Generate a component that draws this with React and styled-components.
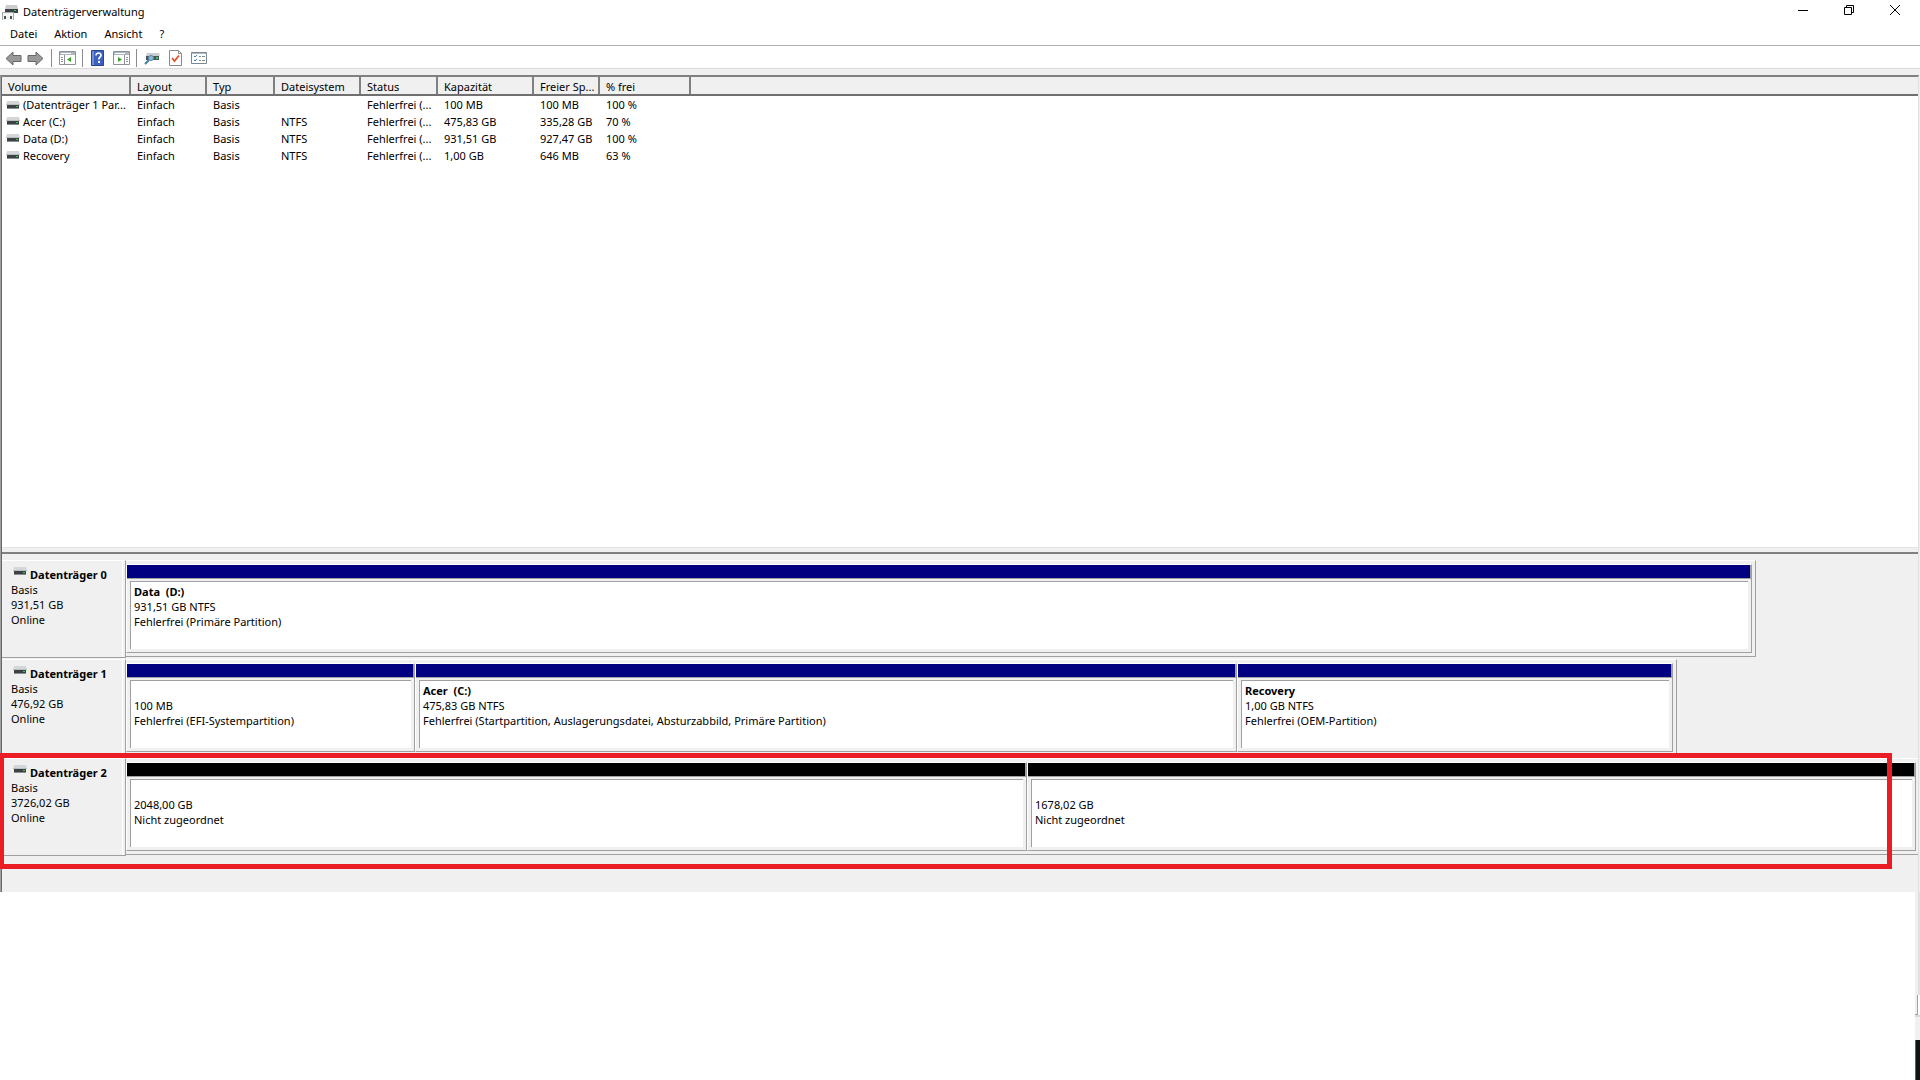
import React from 'react';
import styled, { createGlobalStyle } from 'styled-components';

const GlobalStyle = createGlobalStyle`
  *, *::before, *::after {
    box-sizing: border-box;
  }

  html, body, #root {
    height: 100%;
    margin: 0;
  }

  body {
    background: #ffffff;
    color: #000000;
    font: 11px/15px "Noto Sans", "Open Sans", sans-serif;
    overflow: hidden;
  }
`;

const Page = styled.div`
  display: flex;
  min-height: 100%;
  flex-direction: column;
`;

const TitleBar = styled.header`
  display: flex;
  height: 24px;
  align-items: center;
  padding: 0 2px;
`;

const Title = styled.h1`
  flex: 1;
  margin: 0 0 0 5px;
  font-size: 11px;
  font-weight: 400;
  line-height: 24px;
`;

const WindowButton = styled.button`
  display: flex;
  width: 46px;
  height: 24px;
  align-items: center;
  justify-content: center;
  padding: 0 0 4px;
  border: 0;
  background: none;
`;

const MenuBar = styled.nav`
  display: flex;
  height: 22px;
  gap: 17px;
  padding: 0 10px;
  border-bottom: 1px solid #b0b0b0;
`;

const MenuItem = styled.button`
  height: 20px;
  padding: 0;
  border: 0;
  background: none;
  color: inherit;
  font: inherit;
  line-height: 20px;
`;

const Toolbar = styled.div`
  display: flex;
  height: 23px;
  align-items: center;
  padding: 2px 0 0 4px;
  border-bottom: 1px solid #d9d9d9;
`;

const ToolButton = styled.button`
  display: flex;
  width: ${props => props.$width || 23}px;
  height: 20px;
  align-items: center;
  justify-content: center;
  padding: 0;
  border: 0;
  background: none;
`;

const Separator = styled.span`
  width: 1px;
  height: 18px;
  margin: 0 3px;
  background: #8c8c8c;
`;

const Body = styled.main`
  display: flex;
  height: 823px;
  flex-direction: column;
  padding: 6px 1px 0 0;
  background: #f0f0f0;
`;

const Panes = styled.div`
  display: flex;
  flex: 1;
  flex-direction: column;
  border-top: 2px solid #808080;
  border-right: 1px solid #e0e0e0;
  border-left: 1px solid #a0a0a0;
  box-shadow: inset 1px 0 #696969;
  padding-left: 1px;
`;

const VolumePane = styled.section`
  height: 470px;
  background: #ffffff;
`;

const VolumeTable = styled.table`
  width: 100%;
  border-collapse: collapse;
  border-spacing: 0;
  table-layout: fixed;
`;

const HeadCell = styled.th`
  width: ${props => (props.$width ? `${props.$width}px` : 'auto')};
  height: 18px;
  padding: 1px 0 0 6px;
  overflow: hidden;
  border-right: ${props => (props.$width ? '2px solid #808080' : '0')};
  border-bottom: 2px solid #707070;
  background: #f0f0f0;
  font-weight: 400;
  line-height: 15px;
  text-align: left;
  white-space: nowrap;
`;

const Cell = styled.td`
  height: 17px;
  padding: 1px 0 0 7px;
  overflow: hidden;
  line-height: 15px;
  white-space: nowrap;
`;

const VolumeName = styled.span`
  display: flex;
  align-items: center;
  gap: 3px;
  margin-left: -3px;
`;

const Splitter = styled.div`
  height: 7px;
  border-top: 1px solid #e3e3e3;
  border-bottom: 2px solid #808080;
`;

const DiskList = styled.section`
  padding-top: 6px;
`;

const DiskRow = styled.div`
  position: relative;
  display: flex;
  height: 99px;
`;

const DiskInfo = styled.div`
  width: 124px;
  height: 98px;
  padding: 6px 0 0 9px;
  border-top: 1px solid #ffffff;
  border-right: 1px solid #a0a0a0;
  border-bottom: 1px solid #a0a0a0;
  box-shadow: inset -2px 0 #f0f0f0, inset -3px 0 #ffffff;
`;

const DiskName = styled.h2`
  display: flex;
  gap: 3px;
  margin: 0 0 0 2px;
  font-size: 11px;
  font-weight: 700;
  line-height: 15px;
`;

const Line = styled.div`
  height: 15px;
  white-space: pre;
`;

const DiskArea = styled.div`
  flex: 1;
`;

const DiskFrame = styled.div`
  display: grid;
  width: ${props => props.$share}%;
  height: 97px;
  grid-template-columns: ${props => props.$columns};
  padding: 3px ${props => (props.$share === 100 ? 2 : 3)}px 3px 0;
  border: solid #a0a0a0;
  border-width: 1px ${props => (props.$share === 100 ? 0 : 1)}px 1px 0;
  border-top-color: #ffffff;
`;

const Partition = styled.div`
  display: flex;
  min-width: 0;
  flex-direction: column;
  border: 1px solid #a0a0a0;
  border-top-color: #ffffff;
  border-left-color: #ffffff;
`;

const PartitionBar = styled.div`
  height: 14px;
  border-right: 1px solid #a0a0a0;
  border-bottom: 1px solid #a0a0a0;
  background: ${props => props.$color};
`;

const PartitionBox = styled.div`
  flex: 1;
  margin: 2px 3px 3px;
  padding: 2px 0 0 3px;
  overflow: hidden;
  border-top: 1px solid #a0a0a0;
  border-left: 1px solid #a0a0a0;
  background: #ffffff;
`;

const PartitionName = styled(Line)`
  font-weight: 700;
`;

const Marker = styled.div`
  position: absolute;
  z-index: 1;
  top: -5px;
  right: 26px;
  left: -2px;
  height: 116px;
  border: 5px solid #ec1c24;
  border-left-width: 4px;
  pointer-events: none;
`;

// what is left of the windows behind, along the right edge
const Background = styled.div`
  display: flex;
  flex: 1;
  width: 5px;
  flex-direction: column;
  align-self: flex-end;
`;

const BackgroundEdge = styled.div`
  flex: 1;
  border-right: 2px solid #e0e0e0;
  background: #f0f0f0;
`;

const BackgroundPanel = styled.div`
  height: 20px;
  margin-right: 2px;
  border-right: 1px solid #a0a0a0;
  border-bottom: 1px solid #a0a0a0;
  background: #f0f0f0;
`;

const BackgroundStatus = styled.div`
  height: 25px;
  border-top: 2px solid #d9d9d9;
  background: #f0f0f0;
`;

const BackgroundTaskbar = styled.div`
  height: 40px;
  border-left: 1px solid #5c5f5c;
  background: #101410;
`;

const DriveIcon = () => (
  <svg width="14" height="8" viewBox="0 0 14 8" aria-hidden="true">
    <path d="M1 0h12l1 4H0z" fill="#d3d7da" />
    <path d="M0 3h14v1H0z" fill="#b9bec1" />
    <path d="M1 4h12v3H1z" fill="#3d4143" />
    <path d="M1 7h12v1H1z" fill="#8a8f92" />
    <path d="M10 5h2v1h-2z" fill="#35d04b" />
  </svg>
);

const AppIcon = () => (
  <svg width="16" height="16" viewBox="0 0 16 16" aria-hidden="true">
    <path d="M4 1h11l1 4H3z" fill="#c9cdcf" />
    <path d="M3 5h13v4H3z" fill="#3d4143" />
    <path d="M12 6h2v1h-2z" fill="#35d04b" />
    <path d="M0 8h12v8H0z" fill="#a4a8ab" />
    <path d="M1 9h10v7H1z" fill="#f4f5f5" />
    <path d="M2 12h2v3H2zM8 12h2v3H8z" fill="#4a4e50" />
  </svg>
);

const ArrowIcon = ({ forward }) => (
  <svg width="17" height="15" viewBox="0 0 17 15" aria-hidden="true">
    <path
      d="M1 7.500 8 1v3.500h8v6H8V14z"
      transform={forward ? 'translate(17 0) scale(-1 1)' : undefined}
      fill="#999999"
      stroke="#686868"
    />
  </svg>
);

const PaneIcon = ({ forward }) => (
  <svg width="17" height="14" viewBox="0 0 17 14" aria-hidden="true">
    <path d="M.5.5h16v13H.5z" fill="#ffffff" stroke="#8b929a" />
    <path d="M1 1h15v3H1z" fill="#aeb5bd" />
    <path d="M2 2.500h10" stroke="#ffffff" />
    <path d={forward ? 'M11.500 4v9' : 'M5.500 4v9'} stroke="#8b929a" />
    <path d={forward ? 'M13 6.500h2M13 8.500h2M13 10.500h2' : 'M2 6.500h2M2 8.500h2M2 10.500h2'} stroke="#8b929a" />
    <path d={forward ? 'M5 6v5l4-2.500z' : 'M12 6v5L8 8.500z'} fill="#3ba32b" />
  </svg>
);

const HelpIcon = () => (
  <svg width="14" height="16" viewBox="0 0 14 16" aria-hidden="true">
    <path d="M.5.5h12v15H.5z" fill="#3c62bd" stroke="#28458f" />
    <path d="M1 1h2v14H1z" fill="#6f8ed6" />
    <path d="M5 5.500c0-3.500 5.500-3 5 0-.3 1.700-2.300 1.700-2.300 4" fill="none" stroke="#ffffff" strokeWidth="1.600" />
    <path d="M7 11h2v2H7z" fill="#ffffff" />
  </svg>
);

const ProbeIcon = () => (
  <svg width="16" height="13" viewBox="0 0 16 13" aria-hidden="true">
    <path d="M3 1h12l1 3H2z" fill="#c9cdcf" />
    <path d="M2 4h13v4H2z" fill="#4a5355" />
    <path d="M12 5h2v2h-2z" fill="#35d04b" />
    <circle cx="7" cy="6" r="2.500" fill="#8fb9d8" stroke="#5b8bb0" />
    <path d="m5 8-4 4" stroke="#477aa6" strokeWidth="2" />
  </svg>
);

const CheckIcon = () => (
  <svg width="13" height="16" viewBox="0 0 13 16" aria-hidden="true">
    <path d="M.5.5h9l3 3v12H.5z" fill="#ffffff" stroke="#8b8b8b" />
    <path d="M9.500.5v3h3" fill="none" stroke="#8b8b8b" />
    <path d="m3 8 2.500 3L10 5.500" fill="none" stroke="#e0522a" strokeWidth="1.800" />
  </svg>
);

const ListIcon = () => (
  <svg width="16" height="13" viewBox="0 0 16 13" aria-hidden="true">
    <path d="M.5.5h15v11H.5z" fill="#ffffff" stroke="#7c8791" />
    <path d="M1 1h14v1H1z" fill="#b4bbc2" />
    <path d="m3 4 1 1 2-2M3 8l1 1 2-2" fill="none" stroke="#3d80c4" />
    <path d="M8 4.500h2M11 4.500h3M8 8.500h2M11 8.500h3" stroke="#7c8791" />
  </svg>
);

const columns = [
  { label: 'Volume', width: 128 },
  { label: 'Layout', width: 76 },
  { label: 'Typ', width: 68 },
  { label: 'Dateisystem', width: 86 },
  { label: 'Status', width: 77 },
  { label: 'Kapazität', width: 96 },
  { label: 'Freier Sp...', width: 66 },
  { label: '% frei', width: 91 },
  { label: '' },
];

const volumes = [
  ['(Datenträger 1 Par...', 'Einfach', 'Basis', '', 'Fehlerfrei (...', '100 MB', '100 MB', '100 %'],
  ['Acer (C:)', 'Einfach', 'Basis', 'NTFS', 'Fehlerfrei (...', '475,83 GB', '335,28 GB', '70 %'],
  ['Data (D:)', 'Einfach', 'Basis', 'NTFS', 'Fehlerfrei (...', '931,51 GB', '927,47 GB', '100 %'],
  ['Recovery', 'Einfach', 'Basis', 'NTFS', 'Fehlerfrei (...', '1,00 GB', '646 MB', '63 %'],
];

const disks = [
  {
    name: 'Datenträger 0',
    size: '931,51 GB',
    share: 90.95,
    columns: '1fr',
    color: '#000080',
    partitions: [{ name: 'Data  (D:)', size: '931,51 GB NTFS', status: 'Fehlerfrei (Primäre Partition)' }],
  },
  {
    name: 'Datenträger 1',
    size: '476,92 GB',
    share: 86.55,
    columns: '289fr 822fr 436fr',
    color: '#000080',
    partitions: [
      { name: '', size: '100 MB', status: 'Fehlerfrei (EFI-Systempartition)' },
      {
        name: 'Acer  (C:)',
        size: '475,83 GB NTFS',
        status: 'Fehlerfrei (Startpartition, Auslagerungsdatei, Absturzabbild, Primäre Partition)',
      },
      { name: 'Recovery', size: '1,00 GB NTFS', status: 'Fehlerfrei (OEM-Partition)' },
    ],
  },
  {
    name: 'Datenträger 2',
    size: '3726,02 GB',
    share: 100,
    columns: '901fr 889fr',
    color: '#000000',
    marked: true,
    partitions: [
      { name: '', size: '2048,00 GB', status: 'Nicht zugeordnet' },
      { name: '', size: '1678,02 GB', status: 'Nicht zugeordnet' },
    ],
  },
];

const Disk = ({ disk }) => (
  <DiskRow>
    <DiskInfo>
      <DiskName>
        <DriveIcon />
        {disk.name}
      </DiskName>
      <Line>Basis</Line>
      <Line>{disk.size}</Line>
      <Line>Online</Line>
    </DiskInfo>
    <DiskArea>
      <DiskFrame $share={disk.share} $columns={disk.columns}>
        {disk.partitions.map(partition => (
          <Partition key={partition.size}>
            <PartitionBar $color={disk.color} />
            <PartitionBox>
              <PartitionName>{partition.name}</PartitionName>
              <Line>{partition.size}</Line>
              <Line>{partition.status}</Line>
            </PartitionBox>
          </Partition>
        ))}
      </DiskFrame>
    </DiskArea>
    {disk.marked && <Marker />}
  </DiskRow>
);

const App = () => (
  <Page>
    <GlobalStyle />
    <TitleBar>
      <AppIcon />
      <Title>Datenträgerverwaltung</Title>
      <WindowButton aria-label="Minimieren">
        <svg width="10" height="10"><path d="M0 5.500h10" stroke="#000000" /></svg>
      </WindowButton>
      <WindowButton aria-label="Verkleinern">
        <svg width="10" height="10"><path d="M.5 2.500h7v7h-7zM2.500 2.500v-2h7v7h-2" fill="none" stroke="#000000" /></svg>
      </WindowButton>
      <WindowButton aria-label="Schließen">
        <svg width="10" height="10"><path d="m0 0 10 10M10 0 0 10" stroke="#000000" /></svg>
      </WindowButton>
    </TitleBar>
    <MenuBar>
      <MenuItem>Datei</MenuItem>
      <MenuItem>Aktion</MenuItem>
      <MenuItem>Ansicht</MenuItem>
      <MenuItem>?</MenuItem>
    </MenuBar>
    <Toolbar>
      <ToolButton $width={18} aria-label="Zurück"><ArrowIcon /></ToolButton>
      <ToolButton $width={26} aria-label="Vorwärts"><ArrowIcon forward /></ToolButton>
      <Separator />
      <ToolButton $width={24} aria-label="Konsolenstruktur"><PaneIcon /></ToolButton>
      <Separator />
      <ToolButton aria-label="Hilfe"><HelpIcon /></ToolButton>
      <ToolButton $width={24} aria-label="Aktionsbereich"><PaneIcon forward /></ToolButton>
      <Separator />
      <ToolButton $width={24} aria-label="Datenträger neu einlesen"><ProbeIcon /></ToolButton>
      <ToolButton aria-label="Eigenschaften"><CheckIcon /></ToolButton>
      <ToolButton aria-label="Ansicht"><ListIcon /></ToolButton>
    </Toolbar>
    <Body>
      <Panes>
        <VolumePane>
          <VolumeTable>
            <thead>
              <tr>
                {columns.map(({ label, width }) => (
                  <HeadCell key={label} $width={width}>{label}</HeadCell>
                ))}
              </tr>
            </thead>
            <tbody>
              {volumes.map(([name, ...values]) => (
                <tr key={name}>
                  <Cell>
                    <VolumeName>
                      <DriveIcon />
                      {name}
                    </VolumeName>
                  </Cell>
                  {values.map((value, index) => (
                    <Cell key={columns[index + 1].label}>{value}</Cell>
                  ))}
                </tr>
              ))}
            </tbody>
          </VolumeTable>
        </VolumePane>
        <Splitter />
        <DiskList>
          {disks.map(disk => <Disk key={disk.name} disk={disk} />)}
        </DiskList>
      </Panes>
    </Body>
    <Background>
      <BackgroundEdge />
      <BackgroundPanel />
      <BackgroundStatus />
      <BackgroundTaskbar />
    </Background>
  </Page>
);

export default App;
